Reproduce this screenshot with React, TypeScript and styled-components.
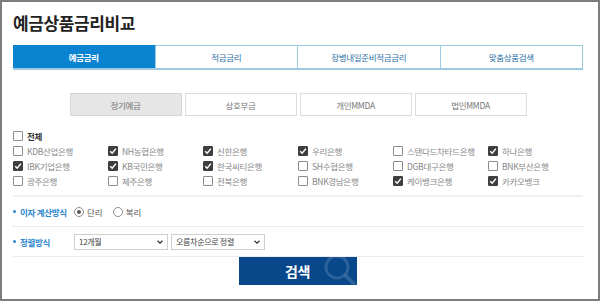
import React from 'react';
import styled, { createGlobalStyle } from 'styled-components';

const Global = createGlobalStyle`
  html, body { margin: 0; padding: 0; background: #fff; }
  body { font-family: "Noto Sans CJK KR", "Noto Sans", sans-serif; }
`;

const Frame = styled.div`
  box-sizing: border-box;
  width: 600px;
  height: 301px;
  border: 2px solid #7d7d7d;
  padding: 0 15px 0 11px;
  overflow: hidden;
`;

const Title = styled.h1`
  margin: 0;
  height: 43px;
  padding-top: 9px;
  box-sizing: border-box;
  font-size: 17px;
  font-weight: 700;
  letter-spacing: -0.4px;
  color: #222;
  line-height: 24px;
`;

const Tabs = styled.div`
  display: grid;
  grid-template-columns: repeat(4, 1fr);
  height: 25px;
  border-bottom: 2px solid #9ccbe0;
  box-sizing: border-box;
`;

const Tab = styled.div<{ $active?: boolean }>`
  display: flex;
  align-items: center;
  justify-content: center;
  font-size: 8.5px;
  letter-spacing: -0.3px;
  color: ${p => (p.$active ? '#fff' : '#2b6ea8')};
  background: ${p => (p.$active ? '#0a84d0' : '#fff')};
  border-top: 1px solid ${p => (p.$active ? '#0a84d0' : '#9ccbe0')};
  border-right: 1px solid #9ccbe0;
  font-weight: ${p => (p.$active ? 700 : 400)};
`;

const SubTabs = styled.div`
  display: flex;
  justify-content: center;
  gap: 3px;
  margin-top: 23px;
  height: 23px;
`;

const SubTab = styled.div<{ $active?: boolean }>`
  width: 112px;
  box-sizing: border-box;
  display: flex;
  align-items: center;
  justify-content: center;
  font-size: 8.5px;
  color: #777;
  letter-spacing: -0.3px;
  background: ${p => (p.$active ? '#e6e6e6' : '#fff')};
  border: 1px solid ${p => (p.$active ? '#d6d6d6' : '#dcdcdc')};
`;

const AllRow = styled.div`
  margin-top: 12px;
  height: 15px;
  display: flex;
  align-items: center;
`;

const Grid = styled.div`
  display: grid;
  grid-template-columns: repeat(6, 95px);
  grid-auto-rows: 15px;
  margin-top: 0;
`;

const Check = styled.label<{ $bold?: boolean }>`
  display: flex;
  align-items: center;
  gap: 4px;
  font-size: 8.5px;
  letter-spacing: -0.3px;
  color: ${p => (p.$bold ? '#333' : '#888')};
  font-weight: ${p => (p.$bold ? 700 : 400)};
  white-space: nowrap;
`;

const Box = styled.span<{ $on?: boolean }>`
  width: 10px;
  height: 10px;
  box-sizing: border-box;
  border-radius: 1px;
  border: 1px solid ${p => (p.$on ? '#3e3e3e' : '#8c8c8c')};
  background: ${p => (p.$on ? '#3e3e3e' : '#fff')};
  display: flex;
  align-items: center;
  justify-content: center;
  flex: none;
`;

const Separator = styled.div`
  margin-top: 7px;
  height: 2px;
  background: #f0f0f0;
`;

const OptionRow = styled.div<{ $dotted?: boolean }>`
  display: flex;
  align-items: center;
  height: 30px;
  border-bottom: 1px ${p => (p.$dotted ? 'dotted #d8d8d8' : 'solid #ececec')};
  box-sizing: border-box;
`;

const OptionLabel = styled.div`
  width: 61px;
  font-size: 8.5px;
  letter-spacing: -0.3px;
  color: #2c86cc;
  font-weight: 700;
  display: flex;
  align-items: center;
  gap: 4px;
  &::before {
    content: '';
    width: 3px;
    height: 3px;
    background: #2c86cc;
    border-radius: 50%;
  }
`;

const Radio = styled.label`
  display: flex;
  align-items: center;
  gap: 3px;
  font-size: 8.5px;
  color: #555;
  margin-right: 10px;
`;

const Dot = styled.span<{ $on?: boolean }>`
  width: 10px;
  height: 10px;
  box-sizing: border-box;
  border-radius: 50%;
  border: 1px solid #8c8c8c;
  display: flex;
  align-items: center;
  justify-content: center;
  &::after {
    content: '';
    width: 4px;
    height: 4px;
    border-radius: 50%;
    background: ${p => (p.$on ? '#555' : 'transparent')};
  }
`;

const Select = styled.div`
  width: 94px;
  height: 16px;
  box-sizing: border-box;
  border: 1px solid #cfcfcf;
  margin-right: 3px;
  padding: 0 4px;
  display: flex;
  align-items: center;
  justify-content: space-between;
  font-size: 8px;
  color: #444;
  letter-spacing: -0.3px;
`;

const ButtonRow = styled.div`
  display: flex;
  justify-content: center;
  padding-right: 1px;
`;

const SearchButton = styled.button`
  position: relative;
  overflow: hidden;
  width: 118px;
  height: 28px;
  border: 0;
  padding: 0;
  background: #08478a;
  color: #fff;
  font-family: inherit;
  font-size: 14px;
  font-weight: 700;
  letter-spacing: -0.5px;
`;

const Lens = styled.svg`
  position: absolute;
  right: 0;
  top: -6px;
`;

const Tick = () => (
  <svg width="8" height="8" viewBox="0 0 8 8">
    <path d="M1.2 4.2 L3.2 6.2 L6.9 1.6" fill="none" stroke="#fff" strokeWidth="1.5" />
  </svg>
);

const Chevron = () => (
  <svg width="6" height="4" viewBox="0 0 6 4">
    <path d="M0.5 0.8 L3 3.2 L5.5 0.8" fill="none" stroke="#333" strokeWidth="1.2" />
  </svg>
);

const banks: [string, boolean][] = [
  ['KDB산업은행', false], ['NH농협은행', true], ['신한은행', true],
  ['우리은행', true], ['스탠다드차타드은행', false], ['하나은행', true],
  ['IBK기업은행', true], ['KB국민은행', true], ['한국씨티은행', true],
  ['SH수협은행', false], ['DGB대구은행', false], ['BNK부산은행', false],
  ['광주은행', false], ['제주은행', false], ['전북은행', false],
  ['BNK경남은행', false], ['케이뱅크은행', true], ['카카오뱅크', true],
];

const App = () => (
  <>
    <Global />
    <Frame>
      <Title>예금상품금리비교</Title>
      <Tabs>
        <Tab $active>예금금리</Tab>
        <Tab>적금금리</Tab>
        <Tab>장병내일준비적금금리</Tab>
        <Tab>맞춤상품검색</Tab>
      </Tabs>
      <SubTabs>
        <SubTab $active>정기예금</SubTab>
        <SubTab>상호부금</SubTab>
        <SubTab>개인MMDA</SubTab>
        <SubTab>법인MMDA</SubTab>
      </SubTabs>
      <AllRow>
        <Check $bold><Box />전체</Check>
      </AllRow>
      <Grid>
        {banks.map(([name, on]) => (
          <Check key={name}>
            <Box $on={on}>{on && <Tick />}</Box>
            {name}
          </Check>
        ))}
      </Grid>
      <Separator />
      <OptionRow $dotted>
        <OptionLabel>이자 계산방식</OptionLabel>
        <Radio><Dot $on />단리</Radio>
        <Radio><Dot />복리</Radio>
      </OptionRow>
      <OptionRow>
        <OptionLabel>정렬방식</OptionLabel>
        <Select>12개월<Chevron /></Select>
        <Select>오름차순으로 정렬<Chevron /></Select>
      </OptionRow>
      <ButtonRow>
        <SearchButton>
          검색
          <Lens width="40" height="40" viewBox="0 0 40 40">
            <circle cx="20" cy="16" r="11" fill="none" stroke="rgba(255,255,255,0.15)" strokeWidth="3" />
            <path d="M28 24 L38 34" stroke="rgba(255,255,255,0.15)" strokeWidth="4" />
          </Lens>
        </SearchButton>
      </ButtonRow>
    </Frame>
  </>
);

export default App;
